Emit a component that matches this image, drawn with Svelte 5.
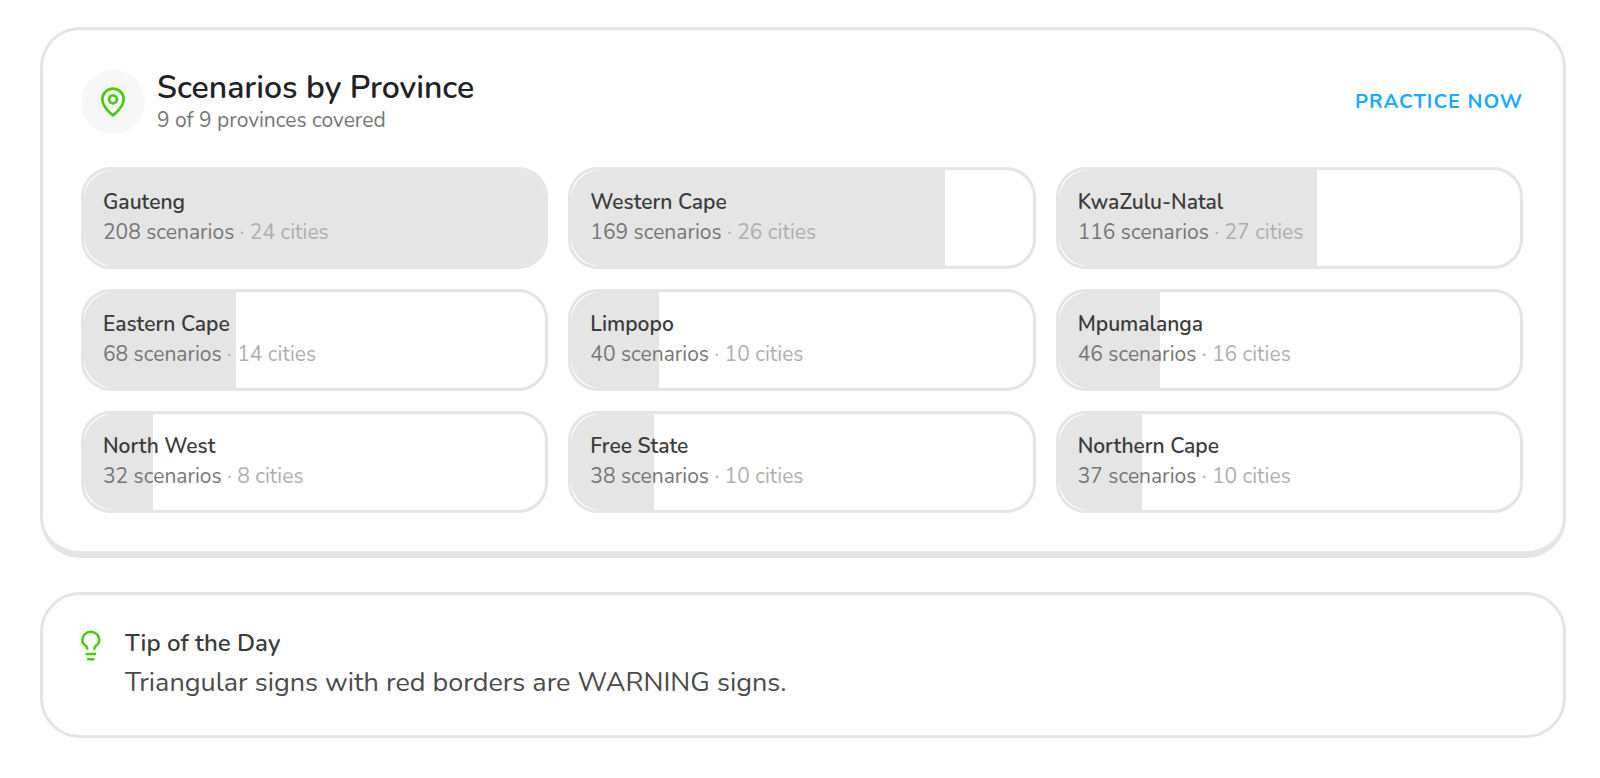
<script>
  const provinces = [
    { name: 'Gauteng', scenarios: 208, cities: 24 },
    { name: 'Western Cape', scenarios: 169, cities: 26 },
    { name: 'KwaZulu-Natal', scenarios: 116, cities: 27 },
    { name: 'Eastern Cape', scenarios: 68, cities: 14 },
    { name: 'Limpopo', scenarios: 40, cities: 10 },
    { name: 'Mpumalanga', scenarios: 46, cities: 16 },
    { name: 'North West', scenarios: 32, cities: 8 },
    { name: 'Free State', scenarios: 38, cities: 10 },
    { name: 'Northern Cape', scenarios: 37, cities: 10 }
  ];
  const most = Math.max(...provinces.map((p) => p.scenarios));
</script>

<main>
  <section class="card provinces">
    <header>
      <span class="badge">
        <svg width="32" height="32" viewBox="0 0 24 24" aria-hidden="true">
          <path d="M20 10c0 6-8 12-8 12s-8-6-8-12a8 8 0 0 1 16 0Z" />
          <circle cx="12" cy="10" r="3" />
        </svg>
      </span>
      <div class="heading">
        <h2>Scenarios by Province</h2>
        <p>{provinces.length} of 9 provinces covered</p>
      </div>
      <a href="#practice">PRACTICE NOW</a>
    </header>
    <ul>
      {#each provinces as p}
        <li>
          <span class="fill" style="width: {Math.round((p.scenarios / most) * 100)}%"></span>
          <div class="label">
            <h3>{p.name}</h3>
            <p>{p.scenarios} scenarios <span>· {p.cities} cities</span></p>
          </div>
        </li>
      {/each}
    </ul>
  </section>

  <section class="card tip">
    <svg class="bulb" width="20" height="31" viewBox="0 0 20 31" aria-hidden="true">
      <path d="M6.300 18.800c-.1-1.300-.7-2.100-1.700-3C2.400 14 1.300 12.200 1.300 10.200a8.500 8.500 0 0 1 17 0c0 2-1.100 3.800-3.300 5.600-1 .9-1.600 1.700-1.700 3" />
      <path d="M5.600 24h8.400M7.200 29.200h5.200" />
    </svg>
    <div>
      <h3>Tip of the Day</h3>
      <p>Triangular signs with red borders are WARNING signs.</p>
    </div>
  </section>
</main>

<style>
  :global(body) {
    background: #fff;
  }
  main {
    display: flex;
    flex-direction: column;
    gap: 34px;
    padding: 27px 34px 40px 40px;
    font-family: Nunito, Lato, sans-serif;
    color: #3c3c3c;
  }
  h2, h3, p, ul {
    margin: 0;
    padding: 0;
  }
  svg {
    flex: none;
    fill: none;
    stroke: #46cc0a;
    stroke-width: 2;
    stroke-linecap: round;
    stroke-linejoin: round;
  }
  .bulb {
    stroke-width: 2.5;
  }
  .card {
    border: 3px solid #e5e5e5;
    border-radius: 40px;
  }
  .provinces {
    border-bottom-width: 7px;
    padding: 40px 40px 38px 38px;
  }
  header {
    display: flex;
    align-items: center;
    gap: 12px;
    margin-bottom: 33px;
  }
  .badge {
    display: grid;
    place-items: center;
    width: 64px;
    height: 64px;
    border-radius: 50%;
    background: #f7f7f7;
  }
  .heading {
    flex: 1;
  }
  h2 {
    font-size: 32px;
    line-height: 36px;
    font-weight: 600;
    color: #222;
  }
  .heading p {
    font-size: 21px;
    line-height: 28px;
    color: #777;
  }
  a {
    font-size: 20px;
    line-height: 30px;
    font-weight: 700;
    letter-spacing: 1px;
    color: #1cabff;
    text-decoration: none;
  }
  ul {
    display: grid;
    grid-template-columns: repeat(3, 1fr);
    gap: 20px;
    list-style: none;
  }
  li {
    position: relative;
    overflow: hidden;
    padding: 17px 19px 19px;
    border: 3px solid #e5e5e5;
    border-radius: 30px;
    font-size: 21px;
    line-height: 30px;
  }
  .fill {
    position: absolute;
    inset: 0 auto 0 0;
    border-radius: 30px 0 0 30px;
    background: #e5e5e5;
  }
  .label {
    position: relative;
  }
  .label h3 {
    font-size: 21px;
    font-weight: 600;
  }
  .label p {
    color: #777;
  }
  .label span {
    color: #afafaf;
  }
  .tip {
    display: flex;
    align-items: flex-start;
    gap: 24px;
    padding: 35px 38px 33px;
  }
  .tip h3 {
    font-size: 24px;
    line-height: 26px;
    font-weight: 600;
  }
  .tip p {
    margin-top: 8px;
    font-size: 27px;
    line-height: 38px;
    color: #4b4b4b;
  }
</style>
